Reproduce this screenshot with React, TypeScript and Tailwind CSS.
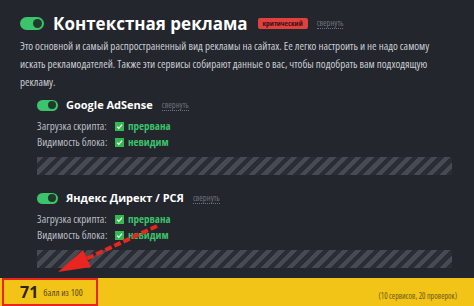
import React from "react";

const Toggle = ({ big }: { big?: boolean }) => (
  <div className={`${big ? "w-[24px] h-[13px]" : "w-[21px] h-[11px]"} rounded-full bg-[#3bc46c] flex items-center justify-end pr-[2px] shrink-0`}>
    <div className={`${big ? "w-[9px] h-[9px]" : "w-[8px] h-[8px]"} rounded-full bg-[#1f3a29]`} />
  </div>
);

const Check = () => (
  <div className="w-[9px] h-[9px] bg-[#34b94f] flex items-center justify-center shrink-0">
    <svg width="7" height="7" viewBox="0 0 10 10">
      <path d="M1.5 5.2 L4 7.6 L8.6 2.2" stroke="#ffffff" strokeWidth="1.8" fill="none" />
    </svg>
  </div>
);

const Stripes = () => (
  <div
    className="h-[18px] w-[415px] mt-[7px]"
    style={{
      backgroundImage:
        "repeating-linear-gradient(135deg, #464a52 0px, #464a52 4.5px, #2a2d34 4.5px, #2a2d34 9px)",
    }}
  />
);

const Collapse = () => (
  <span className="text-[8.5px] font-stretch-[75%] text-[#6f737b] border-b border-dotted border-[#6f737b] leading-[10px]">свернуть</span>
);

const Row = ({ label, value }: { label: string; value: string }) => (
  <div className="flex items-center h-[16px] text-[11px] font-stretch-[75%] whitespace-nowrap">
    <span className="text-[#b9bcc2] w-[78px]">{label}</span>
    <Check />
    <span className="ml-[4px] font-bold text-[#3cc16a]">{value}</span>
  </div>
);

const Sub = ({ title }: { title: string }) => (
  <div className="pl-[37px]">
    <div className="flex items-center h-[18px]">
      <Toggle />
      <span className="ml-[8px] mr-[9px] text-[11px] font-bold font-stretch-[94%] text-white">{title}</span>
      <Collapse />
    </div>
    <div className="mt-[4px]">
      <Row label="Загрузка скрипта:" value="прервана" />
      <Row label="Видимость блока:" value="невидим" />
    </div>
    <Stripes />
  </div>
);

export default function App() {
  return (
    <div className="relative w-[474px] h-[306px] bg-[#23262d] overflow-hidden flex flex-col" style={{ fontFamily: '"Open Sans", "Noto Sans", sans-serif' }}>
      <div className="flex-1">
        <div className="pl-[20px] pt-[9px] flex items-center h-[37px]">
          <Toggle big />
          <span className="ml-[9px] text-[17px] font-bold font-stretch-[94%] text-white leading-none">Контекстная реклама</span>
          <span className="ml-[10px] mr-[9px] bg-[#e0413e] text-[#3a1010] text-[7.5px] font-bold font-stretch-[75%] rounded-[2px] px-[5px] h-[11px] leading-[11px]">критический</span>
          <Collapse />
        </div>
        <p className="pl-[20px] pr-[20px] text-[11px] font-stretch-[75%] leading-[18px] text-[#c9ccd1]">
          Это основной и самый распространенный вид рекламы на сайтах. Ее легко настроить и не надо самому искать рекламодателей. Также эти сервисы собирают данные о вас, чтобы подобрать вам подходящую рекламу.
        </p>
        <div className="mt-[5px]">
          <Sub title="Google AdSense" />
        </div>
        <div className="mt-[14px]">
          <Sub title="Яндекс Директ / РСЯ" />
        </div>
      </div>
      <div className="h-[28px] bg-[#f2c418] flex items-stretch justify-between">
        <div className="ml-[2px] w-[96px] border-2 border-[#e8261f] flex items-center pl-[16px]">
          <span className="text-[16px] font-bold text-[#2a2410]">71</span>
          <span className="ml-[5px] text-[9.5px] font-stretch-[75%] text-[#5a4a16] mt-[2px]">балл из 100</span>
        </div>
        <div className="pr-[17px] flex items-end pb-[4px] text-[8px] font-stretch-[75%] text-[#6b581a]">(10 сервисов, 20 проверок)</div>
      </div>
      <svg className="absolute left-0 top-0 pointer-events-none" width="474" height="306">
        <line x1="157" y1="226" x2="86" y2="259" stroke="#e8261f" strokeWidth="4" strokeDasharray="7 3" />
        <polygon points="58,272 83,250 91,267" fill="#e8261f" />
      </svg>
    </div>
  );
}
